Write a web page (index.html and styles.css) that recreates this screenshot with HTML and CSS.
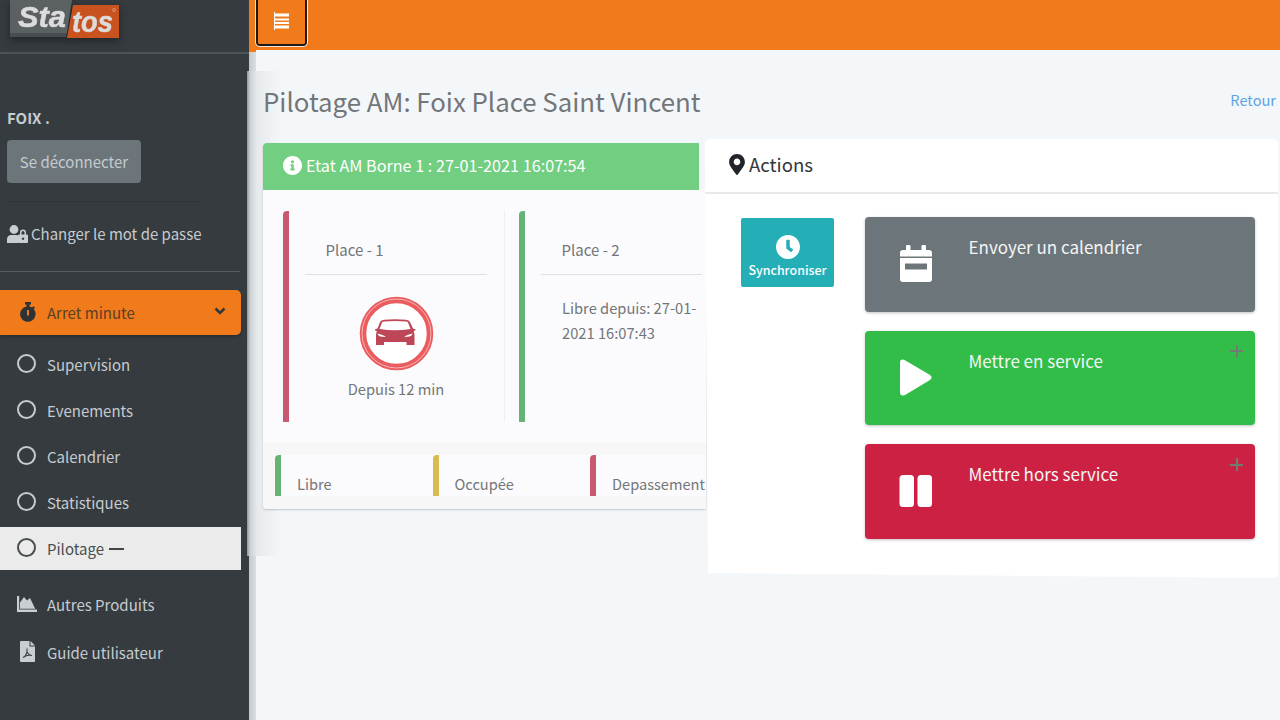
FILE: index.html
```html
<!DOCTYPE html>
<html lang="fr">
<head>
    <meta charset="UTF-8">
    <title>Pilotage AM</title>
    <link rel="stylesheet" href="styles.css">
</head>
<body>
    <div class="sidebar">
        <div class="brand">
            <svg width="112" height="40" viewBox="0 0 112 40">
                <path d="M0 0h62l-5 33H0z" fill="#5b6063"/>
                <path d="M0 33h57l-1 4H0z" fill="#474c50"/>
                <path d="M63 5h46v33H57z" fill="#c9531f"/>
                <text x="8" y="27" class="logo-sta" textLength="48" lengthAdjust="spacingAndGlyphs">Sta</text>
                <text x="62" y="32" class="logo-tos" textLength="41" lengthAdjust="spacingAndGlyphs">tos</text>
                <circle cx="104" cy="10" r="1.5" fill="none" stroke="#dd9470"/>
            </svg>
        </div>
        <div class="user">
            <b class="user-name">FOIX .</b>
            <button class="logout">Se déconnecter</button>
            <hr>
            <a class="password">
                <svg width="21" height="18" viewBox="0 0 21 18" fill="#c9ced3">
                    <circle cx="7" cy="4.5" r="4.4"/>
                    <path d="M0 18v-3.500Q0 10 4.500 10h5q1 0 1.500.4V18z"/>
                    <path d="M12 9.500h1V7.500a3 3 0 0 1 6 0v2h1q1 0 1 1V17q0 1-1 1h-8q-1 0-1-1v-6.500q0-1 1-1zm2.500 0h3v-2a1.500 1.500 0 0 0-3 0zM16 12.500a1.200 1.200 0 1 0 .01 0z" fill-rule="evenodd"/>
                </svg>
                <span>Changer le mot de passe</span>
            </a>
        </div>
        <div class="menu">
            <a class="item active">
                <svg class="icon" width="16" height="20" viewBox="0 0 16 20" fill="#2b3337">
                    <path d="M5 0h6v2.500H9.500v2q1.500.3 2.700 1.100L13.500 4.300 15 5.800 13.800 7.200A7.700 7.700 0 1 1 6.500 4.500v-2H5zM7 8v5.500h2V8z" fill-rule="evenodd"/>
                </svg>
                <span>Arret minute</span>
                <svg class="chevron" width="12" height="8" viewBox="0 0 12 8"><path d="M1.500 1.500 6 6l4.500-4.500" fill="none" stroke="#33393c" stroke-width="2.600"/></svg>
            </a>
            <a class="item"><i class="ring"></i><span>Supervision</span></a>
            <a class="item"><i class="ring"></i><span>Evenements</span></a>
            <a class="item"><i class="ring"></i><span>Calendrier</span></a>
            <a class="item"><i class="ring"></i><span>Statistiques</span></a>
            <a class="item selected"><i class="ring"></i><span>Pilotage</span><i class="dash"></i></a>
            <a class="item produits">
                <svg class="icon" width="20" height="16" viewBox="0 0 20 16" fill="#c9ced3">
                    <path d="M0 0h2.200v13.500H20V16H0z"/><path d="M3 12.800V6.500L7 1l3 3.500L13 2l5.200 10.800z"/>
                </svg>
                <span>Autres Produits</span>
            </a>
            <a class="item">
                <svg class="icon" width="15" height="21" viewBox="0 0 15 21">
                    <path d="M1 0h8.500v5.500H15V20q0 1-1 1H1q-1 0-1-1V1q0-1 1-1z" fill="#c9ced3"/>
                    <path d="M10.500 0 15 4.500h-4.500z" fill="#c9ced3"/>
                    <path d="M3 16.500C6 15 7.500 11 7 8.500 6 11 9 14.500 12 14.500 9 13.500 5 15 3 16.500z" fill="none" stroke="#40474c" stroke-width="1.200"/>
                </svg>
                <span>Guide utilisateur</span>
            </a>
        </div>
    </div>
    <div class="main">
        <div class="topbar">
            <button class="toggle">
                <svg width="16" height="18" viewBox="0 0 16 18" fill="#fff"><path d="M0 0h1v18H0zM1 1.500h14v3H1zM1 6.500h14v2H1zM1 10h14v2H1zM1 13.500h14v3H1z"/></svg>
            </button>
        </div>
        <div class="content">
            <div class="heading">
                <h1>Pilotage AM: Foix Place Saint Vincent</h1>
                <a class="retour">Retour</a>
            </div>
            <div class="columns">
                <div class="card">
                    <div class="card-header">
                        <svg width="19" height="19" viewBox="8 8 496 496" fill="#fff"><path d="M256 8C119 8 8 119 8 256s111 248 248 248 248-111 248-248S393 8 256 8zm0 110c23 0 42 19 42 42s-19 42-42 42-42-19-42-42 19-42 42-42zm56 254c0 7-5 12-12 12h-88c-7 0-12-5-12-12v-24c0-7 5-12 12-12h12v-64h-12c-7 0-12-5-12-12v-24c0-7 5-12 12-12h64c7 0 12 5 12 12v100h12c7 0 12 5 12 12z"/></svg>
                        <span>Etat AM Borne 1 : 27-01-2021 16:07:54</span>
                    </div>
                    <div class="places">
                        <div class="place red">
                            <div class="place-name">Place - 1</div>
                            <div class="place-state">
                                <svg width="75" height="75" viewBox="0 0 75 75">
                                    <circle cx="37.500" cy="37.500" r="33.500" fill="#fff" stroke="#ea5c5e" stroke-width="6.500"/>
                                    <circle cx="37.500" cy="37.500" r="34.500" fill="none" stroke="#f7b5b8" stroke-width="1"/>
                                    <path fill="#bd4657" fill-rule="evenodd" d="M21 26q1-2 4-2.200 11-1 22 0 3 .2 4 2.200l3 6.500 2.500.8q.5 1.700-1.800 1.700l.8 3.500v10.500h-8V46H25v3h-8V38.500l.8-3.500q-2.300 0-1.800-1.700l2.500-.8zM23 26.500 20.500 33q15.500 2.500 31 0L49 26.500q-.5-1-2-1.100-11-.9-22 0-1.500.1-2 1.100zM18.500 37.500q.2 3.500 8 3.500 0-1.500-8-3.500zM53.500 37.500q-8 2-8 3.500 7.800 0 8-3.500z"/>
                                </svg>
                                <div>Depuis 12 min</div>
                            </div>
                        </div>
                        <div class="place green">
                            <div class="place-name">Place - 2</div>
                            <div class="place-text">Libre depuis: 27-01-<br>2021 16:07:43</div>
                        </div>
                    </div>
                    <div class="legend">
                        <div class="green">Libre</div>
                        <div class="yellow">Occupée</div>
                        <div class="red">Depassement</div>
                    </div>
                </div>
                <div class="panel">
                    <div class="panel-header">
                        <svg width="16" height="21" viewBox="0 0 384 512" fill="#212529"><path d="M172 502C27 291 0 269 0 192 0 86 86 0 192 0s192 86 192 192c0 77-27 99-172 310-10 13-30 13-40 0zM192 272c44 0 80-36 80-80s-36-80-80-80-80 36-80 80 36 80 80 80z"/></svg>
                        <span>Actions</span>
                    </div>
                    <div class="panel-body">
                        <button class="sync">
                            <svg width="24" height="24" viewBox="8 8 496 496" fill="#fff"><path d="M256 8C119 8 8 119 8 256s111 248 248 248 248-111 248-248S393 8 256 8zm57 350L225 294c-3-2-5-6-5-10V116c0-7 5-12 12-12h48c7 0 12 5 12 12v138l63 46c6 4 7 11 3 17l-28 39c-4 5-11 6-17 2z"/></svg>
                            <span>Synchroniser</span>
                        </button>
                        <div class="actions">
                            <div class="action gray">
                                <svg width="34" height="37" viewBox="0 0 34 37" fill="#fff"><path d="M8 0h2.500q1 0 1 1v4h11V1q0-1 1-1H26q1 0 1 1v4h3q3 0 3 3v3.500H1V8q0-3 3-3h3V1q0-1 1-1zM1 13h32v21q0 3-3 3H4q-3 0-3-3zM6 18.500v6h22v-6z" fill-rule="evenodd"/></svg>
                                <span>Envoyer un calendrier</span>
                            </div>
                            <div class="action start">
                                <svg width="34" height="37" viewBox="0 0 34 37" fill="#fff"><path d="M1 4Q1-1 6 1.200L31 16q3 2.500 0 5L6 36Q1 38 1 33z"/></svg>
                                <span>Mettre en service</span>
                                <i class="plus"></i>
                            </div>
                            <div class="action stop">
                                <svg width="34" height="37" viewBox="0 0 34 37" fill="#fff"><rect x="0.500" y="3" width="14.500" height="32" rx="3.500"/><rect x="18.500" y="3" width="14.500" height="32" rx="3.500"/></svg>
                                <span>Mettre hors service</span>
                                <i class="plus"></i>
                            </div>
                        </div>
                    </div>
                </div>
            </div>
        </div>
    </div>
</body>
</html>
```
FILE: styles.css
```css
* {
    box-sizing: border-box;
}
body {
    margin: 0;
    display: flex;
    height: 720px;
    overflow: hidden;
    background-color: #f4f7fa;
    color: #737678;
    font-family: "Noto Sans CJK SC", "Noto Sans", sans-serif;
    font-size: 15px;
    line-height: 24px;
}
svg {
    display: block;
    flex: none;
}
span, h1, .retour {
    white-space: nowrap;
}
button {
    font: inherit;
    border: none;
    padding: 0;
}

/* sidebar */
.sidebar {
    width: 249px;
    flex: none;
    background-color: #353b3f;
    color: #c6cbd0;
}
.brand {
    height: 54px;
    padding-left: 10px;
    border-bottom: 2px solid #4b5358;
}
.brand svg {
    filter: drop-shadow(0 3px 4px rgba(0, 0, 0, 0.4));
}
.logo-sta, .logo-tos {
    font-family: "Liberation Sans", sans-serif;
    font-weight: bold;
    font-style: italic;
    fill: #dcdcdc;
    stroke: #dcdcdc;
    stroke-width: 0.5px;
}
.logo-sta {
    font-size: 29px;
}
.logo-tos {
    font-size: 29px;
}
.user {
    height: 218px;
    width: 240px;
    padding: 52px 0 0 7px;
    border-bottom: 1px solid #565d60;
}
.user-name {
    display: block;
    height: 34px;
}
.logout {
    display: block;
    width: 134px;
    height: 43px;
    border-radius: 4px;
    background-color: #6c757a;
    color: #c6cbd0;
}
.user hr {
    width: 193px;
    margin: 18px 0 20px;
    border: none;
    border-top: 1px solid #2f3538;
}
.password {
    display: flex;
    align-items: center;
    gap: 3px;
}
.menu {
    padding-top: 18px;
}
.item {
    display: flex;
    align-items: center;
    width: 242px;
    height: 46px;
    padding-left: 17px;
}
.item .icon {
    margin-right: 10px;
}
.produits .icon {
    margin-bottom: 2px;
}
.item.active {
    width: 241px;
    height: 45px;
    margin-bottom: 7px;
    padding-left: 20px;
    border-radius: 0 5px 5px 0;
    background-color: #f17a1a;
    color: #5a4029;
    box-shadow: 0 2px 3px rgba(0, 0, 0, 0.2);
}
.item.active .icon {
    margin: 0 11px 2px 0;
}
.chevron {
    margin: 0 15px 3px auto;
}
.ring {
    width: 19px;
    height: 19px;
    margin: 0 11px 3px 0;
    border: 2px solid currentColor;
    border-radius: 50%;
}
.item.selected {
    width: 241px;
    height: 43px;
    margin-top: 1px;
    background-color: #ebebeb;
    color: #484e50;
}
.dash {
    width: 15px;
    height: 2px;
    margin-left: 5px;
    background-color: #444;
}
.produits {
    height: 48px;
    margin-top: 11px;
}
.produits + .item {
    height: 48px;
    padding-left: 20px;
}
.produits + .item .icon {
    margin: 0 12px 3px 0;
}

/* main column */
.main {
    flex: 1;
    position: relative;
    background: linear-gradient(to right, #c5c8ca, #dcdfe2 7px, #f4f7fa 7px);
}
.main::before {
    content: "";
    position: absolute;
    left: -2px;
    top: 71px;
    width: 34px;
    height: 485px;
    background: linear-gradient(to right, #8f9496, #ccd0d2 3px, #e6eaec 10px, #f4f7fa);
}
.topbar {
    position: relative;
    height: 50px;
    padding-left: 6px;
    background-color: #f17a1a;
}
.topbar::after {
    content: "";
    position: absolute;
    left: 0;
    top: 50px;
    width: 7px;
    height: 2px;
    background-color: #f17a1a;
}
.toggle {
    display: flex;
    width: 53px;
    height: 47px;
    padding: 12px 0 0 18px;
    border: 1px solid #fbe3cf;
    border-top: none;
    border-radius: 0 0 5px 5px;
    box-shadow: inset 0 -2px #1b1b1b, inset 2px 0 #1b1b1b, inset -2px 0 #1b1b1b;
    background-color: #f17a1a;
}
.content {
    position: relative;
    padding: 32px 2px 0 14px;
}
.heading {
    display: flex;
    justify-content: space-between;
    height: 57px;
    padding-right: 2px;
}
h1 {
    margin: 0;
    font-size: 25.8px;
    font-weight: 400;
    line-height: 38px;
}
.retour {
    line-height: 36px;
    font-size: 14.6px;
    color: #5fa3e2;
}
.columns {
    display: flex;
}

/* state of the places */
.card {
    width: 443px;
    height: 366px;
    margin-top: 4px;
    flex: none;
    border-radius: 4px 0 0 4px;
    box-shadow: 0 1px 2px rgba(0, 0, 0, 0.2);
    background: linear-gradient(to right, #fbfbfd 436px, #f3f5f7 436px);
}
.card-header {
    display: flex;
    align-items: center;
    gap: 4px;
    width: 436px;
    height: 47px;
    padding: 0 0 3px 20px;
    border-top-left-radius: 4px;
    background-color: #72ce80;
    color: #fff;
    font-size: 16.2px;
}
.places {
    display: flex;
    gap: 14px;
    height: 253px;
    padding: 21px 4px 0 20px;
    background-color: #fbfbfd;
}
.place {
    width: 222px;
    height: 211px;
    flex: none;
    padding: 27px 17px 0 16px;
    border-left: 6px solid;
    border-right: 1px solid #efeff1;
    border-top-left-radius: 4px;
}
.place.green {
    width: 183px;
    border-right: none;
    padding-right: 0;
}
.place-name {
    height: 37px;
    padding-left: 20.5px;
    border-bottom: 1px solid #e0e0e3;
}
.place-state {
    display: flex;
    flex-direction: column;
    align-items: center;
    padding-top: 21px;
    gap: 6px;
    font-size: 14.7px;
}
.place-text {
    padding: 20px 0 0 21px;
    font-size: 14.7px;
    line-height: 25px;
}
.green {
    border-left-color: #66b475;
}
.red {
    border-left-color: #c75a72;
}
.yellow {
    border-left-color: #d8bb52;
}
.legend {
    display: flex;
    height: 66px;
    padding: 12px 0 0 12px;
    border-bottom-left-radius: 4px;
    background-color: #f7f7f8;
}
.legend div {
    width: 157.5px;
    height: 41px;
    flex: none;
    padding: 17px 0 0 16px;
    border-left-width: 6px;
    border-left-style: solid;
    border-top-left-radius: 4px;
    background-color: #fbfbfd;
    font-size: 14.6px;
}
.legend div:last-child {
    width: 116px;
}

/* actions */
.panel {
    position: relative;
    flex: none;
    width: 573px;
    height: 439px;
    margin-left: -1px;
    border-radius: 5px;
    background-color: #fff;
    clip-path: polygon(0 0, 100% 0, 100% 100%, 3px 434px);
}
.panel-header {
    display: flex;
    align-items: center;
    gap: 4px;
    height: 55px;
    padding: 0 0 3px 24px;
    border-bottom: 2px solid #e8e9ea;
    color: #33373a;
    font-size: 18.6px;
}
.panel-body {
    display: flex;
    gap: 30.5px;
    padding: 23px 23px 0 36px;
}
.sync {
    width: 93px;
    height: 69px;
    margin-top: 1px;
    display: flex;
    flex-direction: column;
    align-items: center;
    padding-top: 17px;
    border-radius: 2px;
    background-color: #24afb7;
    color: #fff;
    font-size: 12.4px;
    font-weight: 500;
    line-height: 22px;
}
.actions {
    flex: 1;
    display: flex;
    flex-direction: column;
    gap: 19px;
}
.action {
    position: relative;
    display: flex;
    gap: 36px;
    height: 94.5px;
    padding: 28px 0 0 34px;
    border-radius: 4px;
    color: #f4f6f6;
    font-size: 17px;
    box-shadow: 0 1px 3px rgba(0, 0, 0, 0.25);
}
.action span {
    margin-top: -10px;
}
.gray {
    background-color: #6c757a;
}
.start {
    background-color: #32bd48;
}
.stop {
    background-color: #cd2144;
}
.plus {
    position: absolute;
    right: 12px;
    top: 14px;
    width: 13px;
    height: 13px;
    background:
        linear-gradient(#727c72, #727c72) center / 13px 2px no-repeat,
        linear-gradient(#727c72, #727c72) center / 2px 13px no-repeat;
}
```
